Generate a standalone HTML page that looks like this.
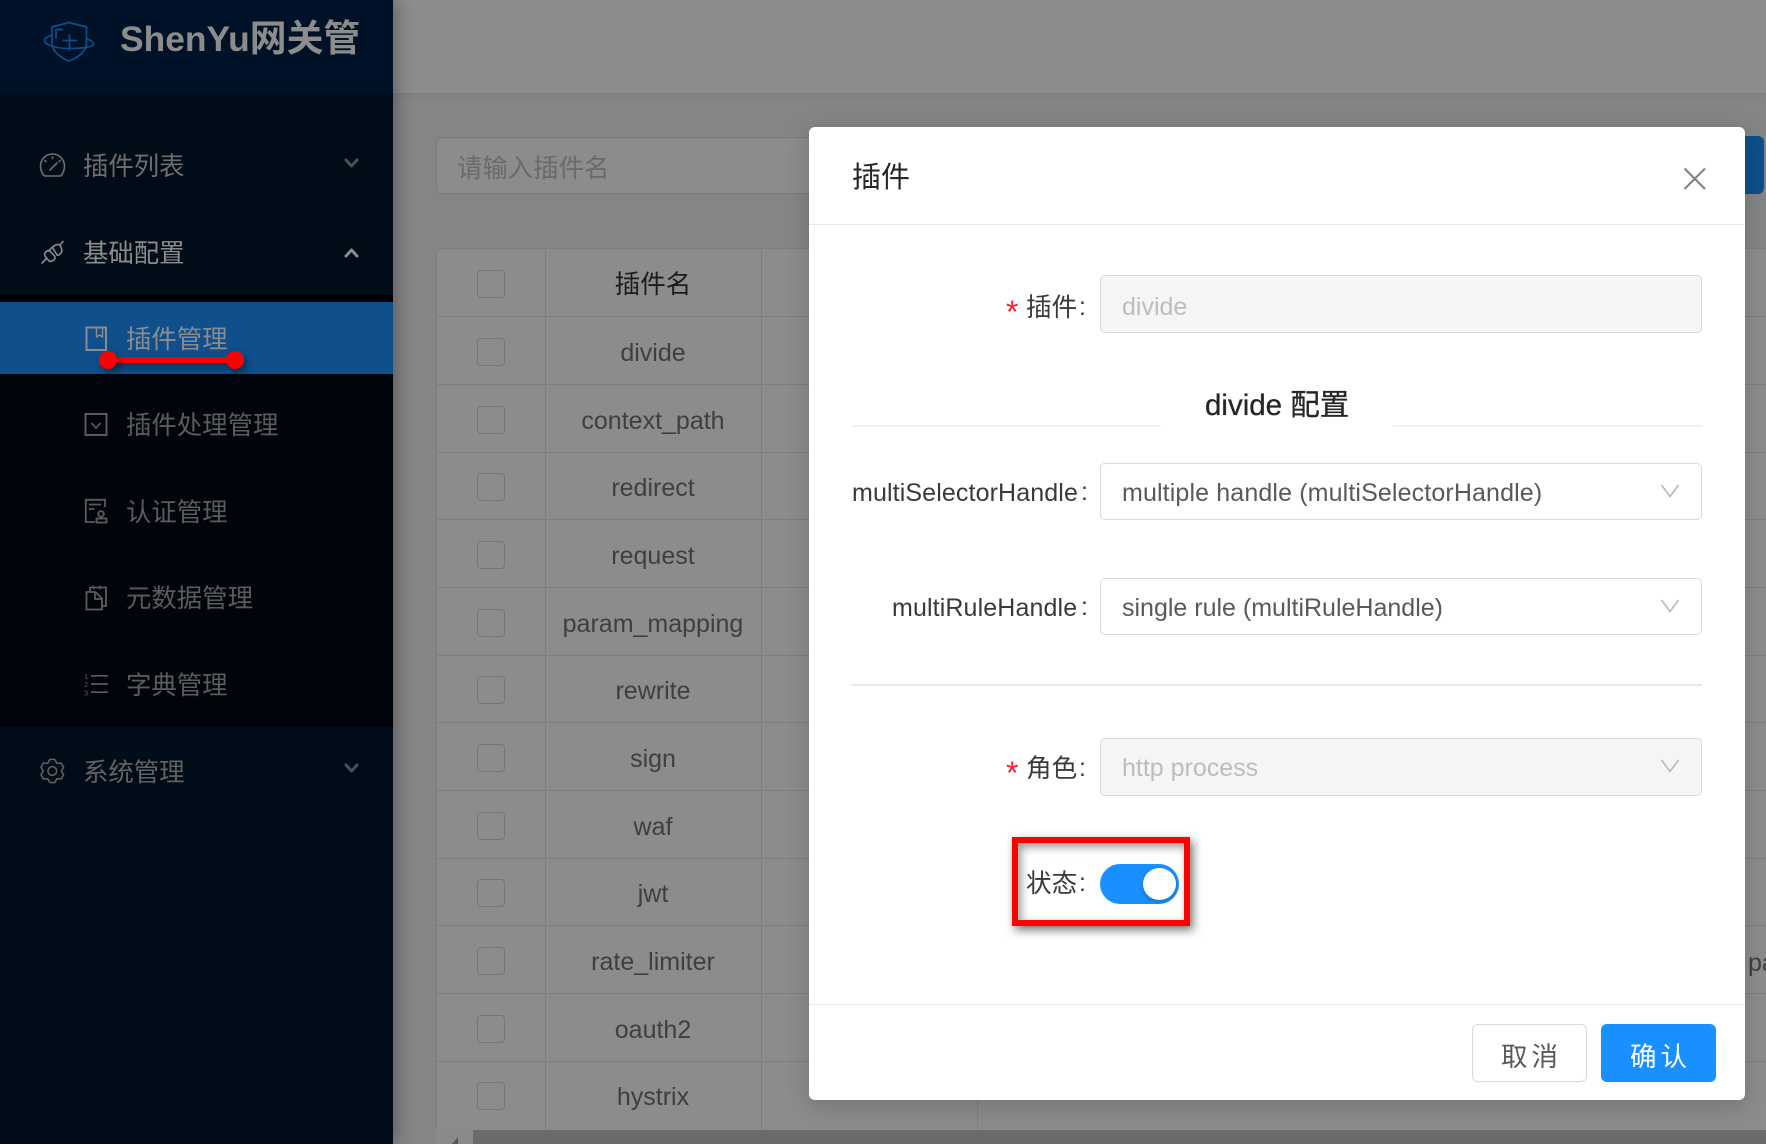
<!DOCTYPE html>
<html lang="zh">
<head>
<meta charset="utf-8">
<title>ShenYu</title>
<style>
html,body{margin:0;padding:0;width:1766px;height:1144px;overflow:hidden;background:#848587;}
body{position:relative;font-family:"Liberation Sans","Noto Sans CJK SC",sans-serif;font-size:25px;}
.a{position:absolute;box-sizing:border-box;}
.t{position:absolute;height:40px;line-height:40px;white-space:nowrap;}
.c{text-align:center;}
.s{font-size:25.4px;}
.m{color:#5b5b5b;}
.cb{position:absolute;left:477px;width:28px;height:28px;border:1px solid #767676;border-radius:4px;box-sizing:border-box;}
.hl{position:absolute;left:436px;width:1330px;height:1px;background:#7e7e7e;}
.cell{position:absolute;left:545px;width:216px;text-align:center;color:#3f3f3f;height:40px;line-height:40px;white-space:nowrap;}
.lb{position:absolute;height:40px;line-height:40px;color:#3a3a3a;white-space:nowrap;text-align:right;}
.cj{font-size:25.6px;}
.inp{position:absolute;left:1100px;width:602px;border:1px solid #d9d9d9;border-radius:5px;box-sizing:border-box;background:#fff;}
.dis{background:#f5f5f5;}
.star{position:absolute;left:1006px;height:40px;line-height:40px;color:#f5222d;font-size:32px;}
</style>
</head>
<body>
<!-- main top bar -->
<div class="a" style="left:393px;top:0;width:1373px;height:93px;background:#8c8c8c;box-shadow:0 1px 6px rgba(0,0,0,.08);"></div>
<!-- search -->
<div class="a" style="left:436px;top:137px;width:500px;height:57px;border:1px solid #7a7a7a;border-radius:6px;background:#8c8c8c;"></div>
<div class="t s" style="left:457px;top:149px;color:#6a6a6a;">请输入插件名</div>
<div class="a" style="left:1700px;top:136px;width:64px;height:58px;background:#0e4f8c;border-radius:6px;"></div>
<!-- table -->
<div class="a" style="left:436px;top:248px;width:1330px;height:882px;background:#8c8c8c;border-left:1px solid #7e7e7e;border-top:1px solid #7e7e7e;border-radius:6px 0 0 0;"></div>
<div class="a" style="left:545px;top:249px;width:1px;height:881px;background:#7e7e7e;"></div>
<div class="a" style="left:761px;top:249px;width:1px;height:881px;background:#7e7e7e;"></div>
<div class="a" style="left:977px;top:1060px;width:1px;height:70px;background:#7e7e7e;"></div>
<div class="hl" style="top:316px"></div><div class="hl" style="top:384px"></div><div class="hl" style="top:452px"></div>
<div class="hl" style="top:519px"></div><div class="hl" style="top:587px"></div><div class="hl" style="top:655px"></div>
<div class="hl" style="top:722px"></div><div class="hl" style="top:790px"></div><div class="hl" style="top:858px"></div>
<div class="hl" style="top:925px"></div><div class="hl" style="top:993px"></div><div class="hl" style="top:1061px"></div>
<div class="cb" style="top:270px"></div><div class="cb" style="top:338px"></div><div class="cb" style="top:406px"></div>
<div class="cb" style="top:473px"></div><div class="cb" style="top:541px"></div><div class="cb" style="top:609px"></div>
<div class="cb" style="top:676px"></div><div class="cb" style="top:744px"></div><div class="cb" style="top:812px"></div>
<div class="cb" style="top:879px"></div><div class="cb" style="top:947px"></div><div class="cb" style="top:1082px"></div>
<div class="cb" style="top:1015px"></div>
<div class="cell" style="top:265px;color:#1c1c1c;font-size:25.6px;">插件名</div>
<div class="cell" style="top:333px">divide</div>
<div class="cell" style="top:401px">context_path</div>
<div class="cell" style="top:468px">redirect</div>
<div class="cell" style="top:536px">request</div>
<div class="cell" style="top:604px">param_mapping</div>
<div class="cell" style="top:671px">rewrite</div>
<div class="cell" style="top:739px">sign</div>
<div class="cell" style="top:807px">waf</div>
<div class="cell" style="top:874px">jwt</div>
<div class="cell" style="top:942px">rate_limiter</div>
<div class="cell" style="top:1010px">oauth2</div>
<div class="cell" style="top:1077px">hystrix</div>
<div class="t" style="left:1748px;top:943px;color:#3f3f3f;">pa</div>
<!-- scrollbar -->
<div class="a" style="left:436px;top:1130px;width:37px;height:14px;background:#8a8a8a;"></div>
<div class="a" style="left:473px;top:1130px;width:1293px;height:14px;background:#6b6b6b;"></div>
<svg class="a" style="left:445px;top:1132px" width="20" height="12"><path d="M13 5 L7 12 H13 Z" fill="#555"/></svg>

<!-- sidebar -->
<div class="a" style="left:0;top:0;width:393px;height:1144px;background:#000c17;box-shadow:3px 0 16px rgba(0,0,0,.32);"></div>
<div class="a" style="left:0;top:0;width:393px;height:93px;background:#001228;"></div>
<div class="a" style="left:0;top:295px;width:393px;height:432px;background:#00050c;"></div>
<div class="a" style="left:0;top:295px;width:393px;height:7px;background:#000;"></div>
<div class="a" style="left:0;top:302px;width:393px;height:72px;background:#0e4f8c;"></div>

<div class="t" style="left:120px;top:19px;font-size:35.4px;font-weight:bold;color:#8c8c8c;">ShenYu<span style="font-size:36.8px">网关管</span></div>
<div class="t s" style="left:83px;top:147px;color:#6e6e6e;">插件列表</div>
<div class="t s" style="left:83px;top:234px;color:#8c8c8c;">基础配置</div>
<div class="t s" style="left:126px;top:320px;color:#8c8c8c;">插件管理</div>
<div class="t s m" style="left:126px;top:406px;">插件处理管理</div>
<div class="t s m" style="left:126px;top:493px;">认证管理</div>
<div class="t s m" style="left:126px;top:579px;">元数据管理</div>
<div class="t s m" style="left:126px;top:666px;">字典管理</div>
<div class="t s" style="left:83px;top:753px;color:#626262;">系统管理</div>

<svg class="a" style="left:0;top:0" width="393" height="800" fill="none" stroke-linecap="round" stroke-linejoin="round">
  <!-- logo -->
  <g stroke="#0d4f8b" stroke-width="1.7">
    <path d="M69 22.5 L86.5 27 V44 C86 52 77 58 69 61 C61 58 53 52 52 44 V27 Z"/>
    <path d="M52 35 C46 37 44 39 44.5 41 C45.5 45 56 48.5 69 48.5 C82 48.5 93 47 93.5 44.5 C94 42.5 91 40.5 86.5 38.5"/>
    <path d="M56 38 V29.5 H62.5"/>
    <path d="M63 40.5 H76 M69.5 35 V50"/>
  </g>
  <!-- gauge -->
  <g stroke="#6e6e6e" stroke-width="1.6">
    <path d="M44.5 176 Q40.5 172 40.5 166 A12 12 0 0 1 64.5 166 Q64.5 172 60.5 176 Z"/>
    <path d="M50 170 L57 163 M52.5 157 V158.5 M45 160.5 L46 161.5 M60 160.5 L59 161.5"/>
  </g>
  <!-- plug -->
  <g stroke="#8c8c8c" stroke-width="1.6">
    <path d="M42 263 L46.5 258.5"/>
    <path d="M45 256 C43.5 253 47 250 49.5 250.5 L55 256.5 C55.5 259 52 262.5 49 261 Z"/>
    <path d="M52.5 247.5 C54 245 58 244 60 245 L62 250 C62 252.5 60 255 57.5 255.5 Z"/>
    <path d="M60 245 L63 241.5 M48.5 251 L52 247.5"/>
  </g>
  <!-- chevrons -->
  <g stroke-width="3">
    <path d="M346 160 L351.5 166 L357 160" stroke="#4f4f4f"/>
    <path d="M346 256 L351.5 250 L357 256" stroke="#8c8c8c"/>
    <path d="M346 765 L351.5 771 L357 765" stroke="#4f4f4f"/>
  </g>
  <!-- book -->
  <g stroke="#8c8c8c" stroke-width="2" stroke-linejoin="miter" stroke-linecap="butt">
    <rect x="86.5" y="327.5" width="19.5" height="22.5"/>
    <path d="M96.5 327.5 V337 L99.5 335 L102.5 337 V327.5" stroke-width="1.4"/>
  </g>
  <!-- carry out -->
  <g stroke="#5b5b5b" stroke-width="2" stroke-linejoin="miter" stroke-linecap="butt">
    <rect x="85.5" y="414" width="21" height="21"/>
    <path d="M91.5 423 L96 428 L100.5 423" stroke-width="1.6"/>
  </g>
  <!-- audit -->
  <g stroke="#5b5b5b" stroke-width="1.8" stroke-linejoin="miter" stroke-linecap="butt">
    <path d="M105 507 V499.8 H85.8 V522 H95"/>
    <path d="M89 504.5 H101 M89 509 H94.5"/>
    <circle cx="101" cy="514" r="2.8"/>
    <rect x="96.5" y="518.5" width="10" height="4"/>
  </g>
  <!-- snippets -->
  <g stroke="#5b5b5b" stroke-width="1.8" stroke-linejoin="miter" stroke-linecap="butt">
    <path d="M86.5 592 H95.5 L102 598.5 V609.5 H86.5 Z"/>
    <path d="M95 592 V599 H102"/>
    <path d="M90 591.5 V587.5 H106 V606 H102"/>
    <path d="M93.5 585.5 V589.5 M100 585.5 V589.5" stroke-width="1.3"/>
  </g>
  <!-- ordered list -->
  <g stroke="#5b5b5b" stroke-width="1.7" stroke-linecap="butt">
    <path d="M91 675.8 H108 M91 684 H108 M91 692.2 H108"/>
  </g>
  <g fill="#5b5b5b" stroke="none" font-size="7.5" font-family="Liberation Sans,sans-serif">
    <text x="84" y="679">1</text><text x="84" y="687">2</text><text x="84" y="695.5">3</text>
  </g>
  <!-- gear -->
  <g stroke="#626262" stroke-width="1.6" transform="translate(52.3,771) scale(.95)">
    <path d="M-2.6 -12.2 L2.6 -12.2 L4.75 -8.2 L9.3 -8.4 L11.9 -3.9 L9.5 0 L11.9 3.9 L9.3 8.4 L4.75 8.2 L2.6 12.2 L-2.6 12.2 L-4.75 8.2 L-9.3 8.4 L-11.9 3.9 L-9.5 0 L-11.9 -3.9 L-9.3 -8.4 L-4.75 -8.2 Z"/>
    <circle cx="0" cy="0" r="4.6"/>
  </g>
</svg>
<!-- red marker -->
<div class="a" style="left:108px;top:357px;width:127px;height:6px;background:#f00;box-shadow:3px 4px 8px rgba(0,0,0,.4);"></div>
<div class="a" style="left:99px;top:351px;width:18px;height:18px;background:#f00;border-radius:50%;box-shadow:3px 4px 8px rgba(0,0,0,.4);"></div>
<div class="a" style="left:226px;top:351px;width:18px;height:18px;background:#f00;border-radius:50%;box-shadow:3px 4px 8px rgba(0,0,0,.4);"></div>

<!-- modal -->
<div class="a" style="left:809px;top:127px;width:936px;height:973px;background:#fff;border-radius:6px;box-shadow:0 6px 24px rgba(0,0,0,.18);"></div>
<div class="t" style="left:852px;top:158px;font-size:29px;color:#262626;">插件</div>
<svg class="a" style="left:1680px;top:164px" width="30" height="30" fill="none"><path d="M4.5 4.5 L25 25 M25 4.5 L4.5 25" stroke="#808080" stroke-width="2"/></svg>
<div class="a" style="left:809px;top:224px;width:936px;height:1px;background:#e8e8e8;"></div>

<!-- row 1 -->
<div class="star" style="top:292px;">*</div>
<div class="lb cj" style="left:1026px;top:288px;">插件</div>
<div class="lb" style="left:1079px;top:287px;">:</div>
<div class="inp dis" style="top:275px;height:58px;"></div>
<div class="t" style="left:1122px;top:287px;color:#bdbdbd;">divide</div>

<!-- divider -->
<div class="a" style="left:852px;top:425px;width:309px;height:2px;background:#f0f0f0;"></div>
<div class="a" style="left:1393px;top:425px;width:309px;height:2px;background:#f0f0f0;"></div>
<div class="t" style="left:1205px;top:386px;font-size:29.5px;color:#262626;-webkit-text-stroke:.3px #262626;">divide <span style="font-size:29.5px">配置</span></div>

<!-- row 2 -->
<div class="lb" style="left:852px;top:473px;letter-spacing:.12px;">multiSelectorHandle</div>
<div class="lb" style="left:1081px;top:472px;">:</div>
<div class="inp" style="top:463px;height:57px;"></div>
<div class="t" style="left:1122px;top:473px;color:#595959;letter-spacing:.13px;">multiple handle (multiSelectorHandle)</div>

<!-- row 3 -->
<div class="lb" style="left:892px;top:588px;letter-spacing:.12px;">multiRuleHandle</div>
<div class="lb" style="left:1081px;top:587px;">:</div>
<div class="inp" style="top:578px;height:57px;"></div>
<div class="t" style="left:1122px;top:588px;color:#595959;">single rule (multiRuleHandle)</div>

<div class="a" style="left:852px;top:684px;width:850px;height:2px;background:#e8e8e8;"></div>

<!-- row 4 -->
<div class="star" style="top:753px;">*</div>
<div class="lb cj" style="left:1026px;top:749px;">角色</div>
<div class="lb" style="left:1079px;top:748px;">:</div>
<div class="inp dis" style="top:738px;height:58px;"></div>
<div class="t" style="left:1122px;top:748px;color:#bdbdbd;">http process</div>

<svg class="a" style="left:1655px;top:478px" width="30" height="320" fill="none" stroke="#b8b8b8" stroke-width="1.6">
  <path d="M6.5 7 L15 18.5 L23.5 7"/>
  <path d="M6.5 122 L15 133.5 L23.5 122"/>
  <path d="M6.5 282 L15 293.5 L23.5 282"/>
</svg>

<!-- row 5 with red box -->
<div class="lb cj" style="left:1026px;top:864px;">状态</div>
<div class="lb" style="left:1079px;top:863px;">:</div>
<div class="a" style="left:1100px;top:864px;width:79px;height:40px;background:#1890ff;border-radius:20px;"></div>
<div class="a" style="left:1143px;top:868px;width:33px;height:32px;background:#fff;border-radius:50%;box-shadow:0 2px 5px rgba(0,35,11,.25);"></div>
<div class="a" style="left:1012px;top:837px;width:178px;height:89px;border:6px solid #f00;box-shadow:3px 4px 9px rgba(0,0,0,.55),inset 3px 4px 9px rgba(0,0,0,.4);"></div>

<!-- footer -->
<div class="a" style="left:809px;top:1004px;width:936px;height:1px;background:#e8e8e8;"></div>
<div class="a" style="left:1472px;top:1024px;width:115px;height:58px;border:1px solid #d9d9d9;border-radius:6px;background:#fff;"></div>
<div class="t c" style="left:1474px;top:1037px;width:115px;color:#595959;letter-spacing:4px;font-size:26.5px;">取消</div>
<div class="a" style="left:1601px;top:1024px;width:115px;height:58px;border-radius:6px;background:#1890ff;box-shadow:0 2px 3px rgba(0,0,0,.05);"></div>
<div class="t c" style="left:1603px;top:1037px;width:115px;color:#fff;letter-spacing:4px;font-size:26.5px;">确认</div>
</body>
</html>
